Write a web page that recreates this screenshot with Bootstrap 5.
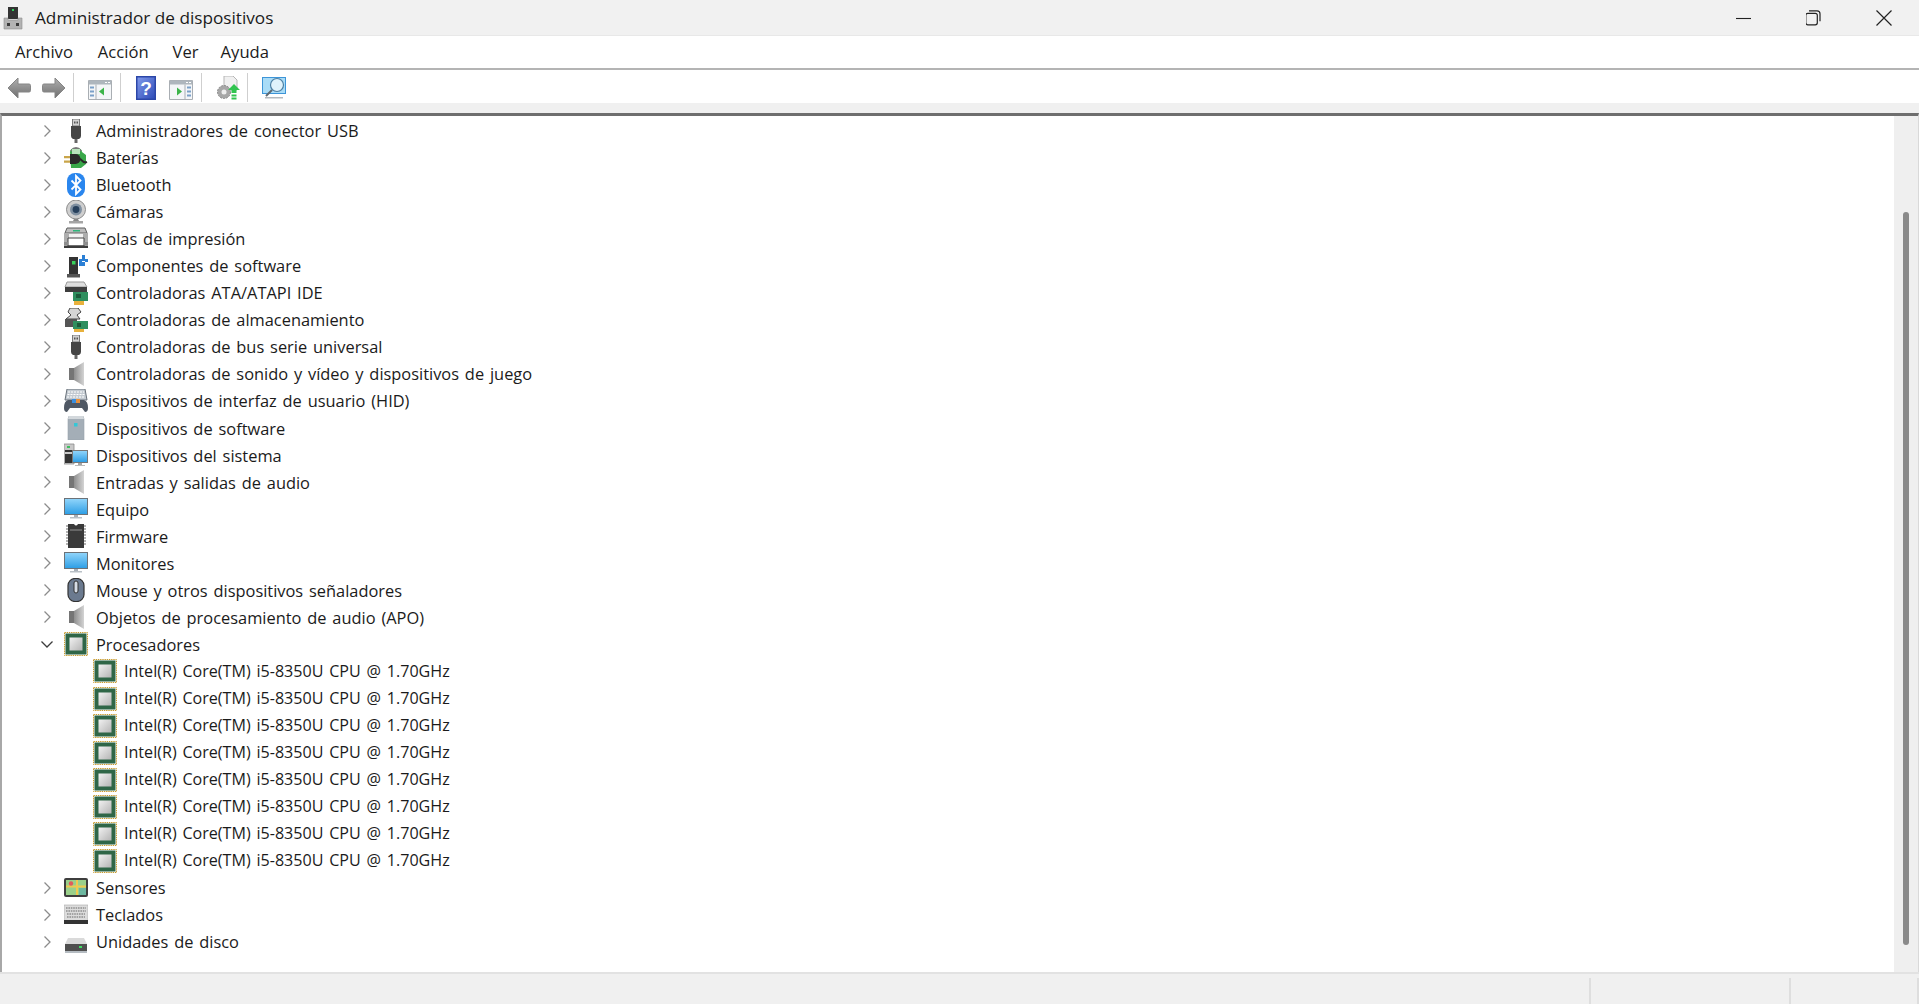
<!DOCTYPE html>
<html lang="es">
<head>
<meta charset="utf-8">
<title>Administrador de dispositivos</title>
<link href="https://cdn.jsdelivr.net/npm/bootstrap@5.3.0/dist/css/bootstrap.min.css" rel="stylesheet">
<style>
html,body{height:100%;overflow:hidden}
body{background:#f0f0f0;color:#1b1b1b;font-family:"Open Sans","Noto Sans","Liberation Sans",sans-serif;font-size:16.4px;word-spacing:1.6px}
.win-title{height:36px;padding-left:3px;background:#f1f1f1;border-bottom:1px solid #e8e8e8}
.win-title .app-name{margin-left:12px;font-size:17.2px;line-height:36px;word-spacing:0}
.win-controls{margin-left:auto}
.win-btn{width:70px;height:35px;border:0;background:none;padding:0;display:flex;align-items:center;justify-content:center}
.win-btn svg{width:16px;height:16px}
.menu-strip{height:34px;background:#fff;border-bottom:2px solid #b4b4b4;padding-left:4px}
.menu-entry{padding:0 11px;margin-right:3px;font-size:16.6px;line-height:32px;color:#1b1b1b;text-decoration:none}
.menu-entry.menu-tight{margin-right:2px}
.tool-strip{height:33px;background:#fff;padding-left:7px;padding-top:2px}
.tool-ico{display:block;width:24px;height:24px;flex:none}
.tool-sep{width:1px;height:29px;background:#cfcfcf;flex:none}
.tm7{margin-left:7px}.tm8{margin-left:8px}.tm11{margin-left:11px}.tm13{margin-left:13px}.tm14{margin-left:14px}
.gap-strip{height:10px;background:#f0f0f0}
.tree-wrap{flex:1 1 0;min-height:0;background:#fff;border-top:3px solid #6e6e6e;border-left:2px solid #a8a8a8;border-right:1px solid #d9d9d9}
.dev-tree{flex:1 1 0;padding-top:1px;margin:0;list-style:none}
.dev-row{height:27.05px;display:flex;align-items:center;white-space:nowrap;line-height:27px}
.chev{width:14px;height:14px;margin-left:38px;flex:none}
.dev-ico{width:24px;height:24px;margin-left:10px;margin-right:8px;flex:none}
.dev-row.child{padding-left:91px;font-size:16.1px}
.dev-row.child .dev-ico{margin:0 7px 0 0}
.scroll-rail{width:24px;background:#efefef;padding:96px 9px 27px}
.scroll-thumb{width:6px;height:100%;border-radius:3px;background:#8a8a8a}
.status-strip{height:32px;background:#f0f0f0;border-top:2px solid #e2e2e2;padding-top:4px}
.status-cell{border-right:2px solid #dedede}
.cell-mid{width:200px}
.cell-end{width:128px}
</style>
</head>
<body class="d-flex flex-column">
<svg width="0" height="0" class="position-absolute" aria-hidden="true">
<defs>
<linearGradient id="gArrow" x1="0" y1="0" x2="0" y2="1"><stop offset="0" stop-color="#b0b0b0"/><stop offset="1" stop-color="#6f6f6f"/></linearGradient>
<linearGradient id="gScreen" x1="0" y1="0" x2="0" y2="1"><stop offset="0" stop-color="#8fd4fa"/><stop offset="1" stop-color="#2f9fe6"/></linearGradient>
<linearGradient id="gSpk" x1="0" y1="0" x2="1" y2="0"><stop offset="0" stop-color="#8e8e8e"/><stop offset="1" stop-color="#d4d4d4"/></linearGradient>
<linearGradient id="gCore" x1="0" y1="0" x2="1" y2="1"><stop offset="0" stop-color="#f2f2f2"/><stop offset="1" stop-color="#b4b4b4"/></linearGradient>
<linearGradient id="gHelp" x1="0" y1="0" x2="1" y2="1"><stop offset="0" stop-color="#7f98ea"/><stop offset="1" stop-color="#2f4db8"/></linearGradient>

<symbol id="i-usb" viewBox="0 0 24 24"><path d="M8.500 0h7v7h-7z" fill="#d2d2d2" stroke="#7a7a7a"/><path d="M10 2.500h1.500v2H10zM12.500 2.500H14v2h-1.500z" fill="#555"/><path d="M7 7h10v10q0 2-2 3H9q-2-1-2-3z" fill="#454545"/><path d="M10.500 20h3v4h-3z" fill="#666"/></symbol>

<symbol id="i-bat" viewBox="0 0 24 24"><path d="M6 6q0-4 6-4t6 4l4 3v9l-5 4H7z" fill="#3aa84a"/><path d="M7 5q5-6 10 0" fill="none" stroke="#777" stroke-width="1.800"/><path d="M8 3h8v5H8z" fill="#b7e3bb"/><path d="M0 10h6v2.200H0zM0 14.500h6v2.200H0z" fill="#c9a54a"/><path d="M6 8h5.500a5 5 0 0 1 0 10H6z" fill="#2a2a2a"/><path d="M15 13c4 0 3 5 8 3" fill="none" stroke="#2a2a2a" stroke-width="2.200"/></symbol>

<symbol id="i-bt" viewBox="0 0 24 24"><rect x="3" y="0" width="18" height="24" rx="8" fill="#2a86ee"/><path d="M7.500 7.500l9 9-4.500 4.500V3l4.500 4.500-9 9" fill="none" stroke="#fff" stroke-width="1.800"/></symbol>

<symbol id="i-cam" viewBox="0 0 24 24"><circle cx="12" cy="9.500" r="9.500" fill="#cfcfcf" stroke="#8c8c8c"/><circle cx="12" cy="9.500" r="6" fill="#7f8fa0"/><circle cx="12" cy="9.500" r="3.400" fill="#27405c"/><path d="M10 19h4l1 2H9z" fill="#8a8a8a"/><path d="M5 21h14v2.500H5z" fill="#a5a5a5"/></symbol>

<symbol id="i-prn" viewBox="0 0 24 24"><path d="M3 1h18l2 5H1z" fill="#bdbdbd" stroke="#5f5f5f"/><path d="M9 3h7v1.500H9z" fill="#2fb57a"/><path d="M0 6h24v9H0z" fill="#adadad"/><path d="M5 7h14v4H5z" fill="#f2f2f2"/><path d="M4 11h16v8H4z" fill="#fff" stroke="#444"/><path d="M0 15h4v3H0zM20 15h4v3h-4z" fill="#8d8d8d"/><path d="M0 18.500h24v2.500H0z" fill="#3c3c3c"/></symbol>

<symbol id="i-soft" viewBox="0 0 24 24"><path d="M5 3h9v17H5z" fill="#333"/><path d="M8 7h3.500v3.500H8z" fill="#37d05a"/><path d="M3 20h13v3.500H3z" fill="#555"/><path d="M15 5h3V1h3v4h3v3h-3v4h-6z" fill="#2a7fd5"/><path d="M18 7h3v1h-3z" fill="#fff"/></symbol>

<symbol id="i-ata" viewBox="0 0 24 24"><path d="M3 1h17l3 5H1z" fill="#dedede" stroke="#9a9a9a"/><path d="M1 6h22v5H1z" fill="#3e3e3e"/><path d="M9 11h15v9H9z" fill="#2f8f5f"/><path d="M12 13h5v4h-5z" fill="#1c5a3a"/><path d="M10 20h10v4H10z" fill="#e8b13c"/></symbol>

<symbol id="i-sto" viewBox="0 0 24 24"><path d="M6 0h8l3 4-4 3 3 4H2l5-4-3-3z" fill="#d5d5d5" stroke="#444"/><path d="M1 11h12v8H1z" fill="#555"/><path d="M9 13h15v8H9z" fill="#2f8f5f"/><path d="M13 15h4v4h-4z" fill="#1c5a3a"/><path d="M10 21h10v3H10z" fill="#e8b13c"/></symbol>

<symbol id="i-spk" viewBox="0 0 24 24"><path d="M10 6L20 0v24L10 18z" fill="url(#gSpk)"/><path d="M5 6h5v12H5z" fill="#757575"/></symbol>

<symbol id="i-hid" viewBox="0 0 24 24"><path d="M3 0h18l2 11H1z" fill="#c3cad1" stroke="#69717a"/><path d="M4 3h16M3.500 5.500h17M3 8h18" stroke="#fff" stroke-width="1.200" stroke-dasharray="2 1"/><path d="M0 19q0-7 4-8h4l2 3h4l2-3h4q4 1 4 8 0 4-3 4l-3-4H6l-3 4q-3 0-3-4z" fill="#4f5864"/><path d="M8 10h4v4H8z" fill="#3a8fe0"/><path d="M12 10h4v4h-4z" fill="#e8903c"/></symbol>

<symbol id="i-swd" viewBox="0 0 24 24"><path d="M5 0h14l1 3v21H4V3z" fill="#a4aeb7" stroke="#98a2ab" stroke-width=".6"/><path d="M5 0h14l1 3H4z" fill="#d3d8dc"/><path d="M10 7h3.500v3.500H10z" fill="#35c7d6"/></symbol>

<symbol id="i-sys" viewBox="0 0 24 24"><path d="M0 1h10v20H0z" fill="#c8c8c8" stroke="#8a8a8a" stroke-width=".8"/><path d="M3 3h3v2H3z" fill="#3fbf5f"/><path d="M1 7h8v2H1zM1 11h8v9H1z" fill="#333"/><path d="M8 7h16v13H8z" fill="#777"/><path d="M9 8h14v11H9z" fill="url(#gScreen)"/><path d="M14 20h4v2h-4z" fill="#a5a5a5"/><path d="M11 22h10v1h-10z" fill="#bbb"/></symbol>

<symbol id="i-mon" viewBox="0 0 24 24"><path d="M0 1h24v17H0z" fill="#6c7278"/><path d="M1 2h22v15H1z" fill="url(#gScreen)"/><path d="M10 18h4v2h-4z" fill="#a8b0b8"/><path d="M6 20h12v1.500H6z" fill="#b9c0c6"/></symbol>

<symbol id="i-fw" viewBox="0 0 24 24"><path d="M4 0h6q2 3 4 0h6v24H4z" fill="#3a3a3a"/><path d="M2 2h2M2 5h2M2 8h2M2 11h2M2 14h2M2 17h2M2 20h2M20 2h2M20 5h2M20 8h2M20 11h2M20 14h2M20 17h2M20 20h2" stroke="#9a9a9a" stroke-width="1.400"/><path d="M6 5h12v2H6z" fill="#666"/></symbol>

<symbol id="i-mou" viewBox="0 0 24 24"><rect x="4" y="0.500" width="16" height="23" rx="7" fill="#6b7a8f" stroke="#333" stroke-width="1.200"/><rect x="10" y="3" width="4" height="12" rx="2" fill="#d6dde6" stroke="#333"/></symbol>

<symbol id="i-cpu" viewBox="0 0 24 24"><path d="M.5.500h23v23H.500z" fill="none" stroke="#c69a2e" stroke-dasharray="1.400 .8"/><rect x="1.500" y="1.500" width="21" height="21" fill="#2f6647"/><rect x="5.500" y="5.500" width="13" height="13" fill="url(#gCore)"/></symbol>

<symbol id="i-sen" viewBox="0 0 24 24"><rect x="0" y="2" width="24" height="19" rx="2" fill="#3e3e3e"/><rect x="2" y="4" width="20" height="15" fill="#9ad08a"/><path d="M2 9.500h20v2H2zM12 4h2v15h-2z" fill="#f0c94e"/><circle cx="7" cy="7.500" r="2.200" fill="#e25b5b"/><path d="M15 12h7v7h-7z" fill="#6cb7a0"/></symbol>

<symbol id="i-kbd" viewBox="0 0 24 24"><path d="M0 2h24v18H0z" fill="#dcdcdc" stroke="#aaa" stroke-width=".6"/><path d="M2 5h20M2 8h20M3 11h18M3 14h18" stroke="#8f8f8f" stroke-width="1.400" stroke-dasharray="1.600 .8"/><path d="M0 17h24v4H0z" fill="#333"/></symbol>

<symbol id="i-dsk" viewBox="0 0 24 24"><path d="M4 8h16l3 6H1z" fill="#dadada"/><path d="M1 14h22v7H1z" fill="#4f4f4f"/><path d="M1 21h22v2H1z" fill="#b5bcc2"/><path d="M15 16h3v2h-3z" fill="#3fdc63"/></symbol>

<symbol id="i-chev-r" viewBox="0 0 14 14"><path d="M4.500 1.500L10 7l-5.500 5.500" fill="none" stroke="#8c8c8c" stroke-width="1.300"/></symbol>
<symbol id="i-chev-d" viewBox="0 0 14 14"><path d="M1.500 4.500L7 10l5.500-5.500" fill="none" stroke="#3c3c3c" stroke-width="1.300"/></symbol>

<symbol id="t-panel" viewBox="0 0 24 24"><path d="M.5 4.500h23v19H.5z" fill="#f4f6f8" stroke="#a9aeb3"/><path d="M1 4.500h22v4H1z" fill="#aeb6bd"/><path d="M17 6h2v1h-2zM20 6h2v1h-2z" fill="#fff"/></symbol>
</defs>
</svg>

<header class="win-title d-flex align-items-center flex-shrink-0">
  <svg width="20" height="24" viewBox="0 0 20 24" aria-hidden="true"><path d="M5 1h10v12H5z" fill="#333"/><path d="M9 3h2v2H9z" fill="#2fd15c"/><path d="M1 12h4v2h10v-2h4v11H1z" fill="#b3b3b3" stroke="#8e8e8e" stroke-width=".6"/><path d="M4 17h3v3H4zM13 17h3v3h-3z" fill="#3a3a3a"/></svg>
  <span class="app-name">Administrador de dispositivos</span>
  <div class="win-controls d-flex">
    <button class="win-btn" type="button" aria-label="Minimizar"><svg viewBox="0 0 16 16"><path d="M0 8.500h15" stroke="#222" stroke-width="1.100"/></svg></button>
    <button class="win-btn" type="button" aria-label="Restaurar"><svg viewBox="1 0 16 16"><rect x=".8" y="3.300" width="11.500" height="11.500" rx="2" fill="none" stroke="#222" stroke-width="1.200"/><path d="M4 .8h8q3 0 3 3v7.500" fill="none" stroke="#222" stroke-width="1.200"/></svg></button>
    <button class="win-btn" type="button" aria-label="Cerrar"><svg viewBox="0 0 16 16"><path d="M.5.500l15 15M15.500.500l-15 15" stroke="#222" stroke-width="1.200"/></svg></button>
  </div>
</header>

<nav class="menu-strip d-flex align-items-center flex-shrink-0">
  <a class="menu-entry" href="#">Archivo</a>
  <a class="menu-entry menu-tight" href="#">Acción</a>
  <a class="menu-entry me-0" href="#">Ver</a>
  <a class="menu-entry" href="#">Ayuda</a>
</nav>

<div class="tool-strip d-flex align-items-center flex-shrink-0">
  <svg class="tool-ico" viewBox="0 0 24 24"><path d="M1 12l10-10v6h11q1.500 0 1.500 1.500v5q0 1.500-1.500 1.500H11v6z" fill="url(#gArrow)" stroke="#868686"/></svg>
  <svg class="tool-ico tm11" viewBox="0 0 24 24"><path d="M23 12L13 2v6H2Q.5 8 .5 9.500v5Q.5 16 2 16h11v6z" fill="url(#gArrow)" stroke="#868686"/></svg>
  <span class="tool-sep tm7"></span>
  <svg class="tool-ico tm14" viewBox="0 0 24 24"><use href="#t-panel"/><path d="M8 8.500v15" stroke="#a9aeb3"/><path d="M2 10.500h4v2H2zM2 14.500h4v2H2zM2 18.500h4v2H2z" fill="#7aa0c8"/><path d="M16 11.500v8l-5-4z" fill="#3cb44a"/></svg>
  <span class="tool-sep tm8"></span>
  <svg class="tool-ico tm13" viewBox="0 0 24 24"><path d="M2 0h20v24H2z" fill="#2b46a8"/><path d="M3.500 1.500h17v21h-17z" fill="url(#gHelp)"/><text x="12" y="19" text-anchor="middle" font-family="Liberation Sans" font-weight="700" font-size="19" fill="#fff">?</text></svg>
  <svg class="tool-ico tm11" viewBox="0 0 24 24"><use href="#t-panel"/><path d="M16 8.500v15" stroke="#a9aeb3"/><path d="M18 10.500h4v2h-4zM18 14.500h4v2h-4zM18 18.500h4v2h-4z" fill="#7aa0c8"/><path d="M8 11.500v8l5-4z" fill="#3cb44a"/></svg>
  <span class="tool-sep tm8"></span>
  <svg class="tool-ico tm14" viewBox="0 0 24 24"><path d="M8 0h9l4 4v10H8z" fill="#f0f0f0" stroke="#b5b5b5"/><circle cx="8" cy="16" r="6.500" fill="#a7a7a7" stroke="#8a8a8a" stroke-dasharray="2 1"/><circle cx="8" cy="16" r="2.500" fill="#eee"/><path d="M18 8l6 6h-3.500v3h-5v-3H12z" fill="#31c44f"/><path d="M15.500 18.500h5v2h-5zM15.500 21.500h5v2h-5z" fill="#31c44f"/></svg>
  <span class="tool-sep tm7"></span>
  <svg class="tool-ico tm14" viewBox="0 0 24 24"><path d="M0 1h24v17H0z" fill="#3d95d8"/><path d="M1 2h22v15H1z" fill="#a9dcf7"/><circle cx="15" cy="9" r="6.500" fill="#dff2fb" stroke="#4d7fa3" stroke-width="1.200"/><path d="M10 14l-6 6" stroke="#606a72" stroke-width="2"/><path d="M3 21h18v1.500H3z" fill="#b3b9be"/></svg>
</div>

<div class="gap-strip flex-shrink-0"></div>

<main class="tree-wrap d-flex">
  <ul class="dev-tree ps-0">
    <li class="dev-row"><svg class="chev"><use href="#i-chev-r"/></svg><svg class="dev-ico"><use href="#i-usb"/></svg>Administradores de conector USB</li>
    <li class="dev-row"><svg class="chev"><use href="#i-chev-r"/></svg><svg class="dev-ico"><use href="#i-bat"/></svg>Baterías</li>
    <li class="dev-row"><svg class="chev"><use href="#i-chev-r"/></svg><svg class="dev-ico"><use href="#i-bt"/></svg>Bluetooth</li>
    <li class="dev-row"><svg class="chev"><use href="#i-chev-r"/></svg><svg class="dev-ico"><use href="#i-cam"/></svg>Cámaras</li>
    <li class="dev-row"><svg class="chev"><use href="#i-chev-r"/></svg><svg class="dev-ico"><use href="#i-prn"/></svg>Colas de impresión</li>
    <li class="dev-row"><svg class="chev"><use href="#i-chev-r"/></svg><svg class="dev-ico"><use href="#i-soft"/></svg>Componentes de software</li>
    <li class="dev-row"><svg class="chev"><use href="#i-chev-r"/></svg><svg class="dev-ico"><use href="#i-ata"/></svg>Controladoras ATA/ATAPI IDE</li>
    <li class="dev-row"><svg class="chev"><use href="#i-chev-r"/></svg><svg class="dev-ico"><use href="#i-sto"/></svg>Controladoras de almacenamiento</li>
    <li class="dev-row"><svg class="chev"><use href="#i-chev-r"/></svg><svg class="dev-ico"><use href="#i-usb"/></svg>Controladoras de bus serie universal</li>
    <li class="dev-row"><svg class="chev"><use href="#i-chev-r"/></svg><svg class="dev-ico"><use href="#i-spk"/></svg>Controladoras de sonido y vídeo y dispositivos de juego</li>
    <li class="dev-row"><svg class="chev"><use href="#i-chev-r"/></svg><svg class="dev-ico"><use href="#i-hid"/></svg>Dispositivos de interfaz de usuario (HID)</li>
    <li class="dev-row"><svg class="chev"><use href="#i-chev-r"/></svg><svg class="dev-ico"><use href="#i-swd"/></svg>Dispositivos de software</li>
    <li class="dev-row"><svg class="chev"><use href="#i-chev-r"/></svg><svg class="dev-ico"><use href="#i-sys"/></svg>Dispositivos del sistema</li>
    <li class="dev-row"><svg class="chev"><use href="#i-chev-r"/></svg><svg class="dev-ico"><use href="#i-spk"/></svg>Entradas y salidas de audio</li>
    <li class="dev-row"><svg class="chev"><use href="#i-chev-r"/></svg><svg class="dev-ico"><use href="#i-mon"/></svg>Equipo</li>
    <li class="dev-row"><svg class="chev"><use href="#i-chev-r"/></svg><svg class="dev-ico"><use href="#i-fw"/></svg>Firmware</li>
    <li class="dev-row"><svg class="chev"><use href="#i-chev-r"/></svg><svg class="dev-ico"><use href="#i-mon"/></svg>Monitores</li>
    <li class="dev-row"><svg class="chev"><use href="#i-chev-r"/></svg><svg class="dev-ico"><use href="#i-mou"/></svg>Mouse y otros dispositivos señaladores</li>
    <li class="dev-row"><svg class="chev"><use href="#i-chev-r"/></svg><svg class="dev-ico"><use href="#i-spk"/></svg>Objetos de procesamiento de audio (APO)</li>
    <li class="dev-row"><svg class="chev"><use href="#i-chev-d"/></svg><svg class="dev-ico"><use href="#i-cpu"/></svg>Procesadores</li>
    <li class="dev-row child"><svg class="dev-ico"><use href="#i-cpu"/></svg>Intel(R) Core(TM) i5-8350U CPU @ 1.70GHz</li>
    <li class="dev-row child"><svg class="dev-ico"><use href="#i-cpu"/></svg>Intel(R) Core(TM) i5-8350U CPU @ 1.70GHz</li>
    <li class="dev-row child"><svg class="dev-ico"><use href="#i-cpu"/></svg>Intel(R) Core(TM) i5-8350U CPU @ 1.70GHz</li>
    <li class="dev-row child"><svg class="dev-ico"><use href="#i-cpu"/></svg>Intel(R) Core(TM) i5-8350U CPU @ 1.70GHz</li>
    <li class="dev-row child"><svg class="dev-ico"><use href="#i-cpu"/></svg>Intel(R) Core(TM) i5-8350U CPU @ 1.70GHz</li>
    <li class="dev-row child"><svg class="dev-ico"><use href="#i-cpu"/></svg>Intel(R) Core(TM) i5-8350U CPU @ 1.70GHz</li>
    <li class="dev-row child"><svg class="dev-ico"><use href="#i-cpu"/></svg>Intel(R) Core(TM) i5-8350U CPU @ 1.70GHz</li>
    <li class="dev-row child"><svg class="dev-ico"><use href="#i-cpu"/></svg>Intel(R) Core(TM) i5-8350U CPU @ 1.70GHz</li>
    <li class="dev-row"><svg class="chev"><use href="#i-chev-r"/></svg><svg class="dev-ico"><use href="#i-sen"/></svg>Sensores</li>
    <li class="dev-row"><svg class="chev"><use href="#i-chev-r"/></svg><svg class="dev-ico"><use href="#i-kbd"/></svg>Teclados</li>
    <li class="dev-row"><svg class="chev"><use href="#i-chev-r"/></svg><svg class="dev-ico"><use href="#i-dsk"/></svg>Unidades de disco</li>
  </ul>
  <div class="scroll-rail flex-shrink-0"><div class="scroll-thumb"></div></div>
</main>

<footer class="status-strip d-flex flex-shrink-0">
  <div class="status-cell flex-grow-1"></div>
  <div class="status-cell flex-shrink-0 cell-mid"></div>
  <div class="status-cell flex-shrink-0 cell-end"></div>
</footer>

<script src="https://cdn.jsdelivr.net/npm/bootstrap@5.3.0/dist/js/bootstrap.bundle.min.js"></script>
</body>
</html>
